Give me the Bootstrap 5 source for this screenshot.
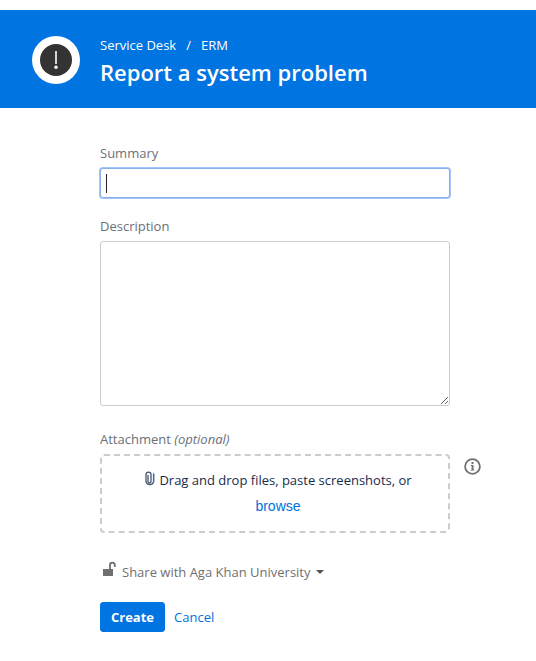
<!DOCTYPE html>
<html lang="en">
<head>
<meta charset="utf-8">
<meta name="viewport" content="width=device-width, initial-scale=1">
<title>Report a system problem</title>
<link href="https://cdn.jsdelivr.net/npm/bootstrap@5.3.0/dist/css/bootstrap.min.css" rel="stylesheet">
<style>
  body { font: 14px/20px "Open Sans", "Noto Sans", sans-serif; color: #172b4d; background: #fff; }
  .text-ui { font-size: 13px; }
  .desk-header { background: #0074e0; margin-top: 10px; padding: 25px 32px 19px; gap: 20px; }
  .desk-header svg { margin-top: 1px; }
  .crumbs { gap: 10px; }
  .desk-title { font-size: 22px; line-height: 34px; font-weight: 600; }
  .request-form { padding: 35px 54px 24px 100px; }
  .field-col { max-width: 350px; }
  .field-gap { margin-bottom: 18px; }
  .area-gap { margin-bottom: 23px; }
  .field-label { color: #6b7078; line-height: 20px; margin-bottom: 5px; }
  .form-control { border-color: #ccc; border-radius: 3px; padding: 4px 6px; font-size: 14px; }
  .summary-box, .summary-box:focus {
    height: 30px; border-color: #8aaee8; box-shadow: 0 0 0 1px #a4c5fb;
    background: linear-gradient(#222, #222) 5px 5px / 1px 19px no-repeat #fff;
  }
  .description-box { height: 165px; resize: vertical; }
  .drop-zone { border: 2px dashed #ccc; border-radius: 4px; padding: 11px 8px 12px 14px; line-height: 26px; }
  .browse-btn { font: 14px/26px "Liberation Sans", Arial, sans-serif; color: #0071dc; }
  .muted-ink { color: #707070; }
  .info-btn { margin: 29px 0 0 14px; }
  .share-btn { gap: 5px; line-height: 20px; }
  .create-btn { --bs-btn-bg: #0074e0; --bs-btn-border-color: #0074e0; border-radius: 3px; padding: 4px 10px; line-height: 20px; font-size: 13px; font-weight: 700; }
  .cancel-link { color: #0071dc; margin-left: 9px; }
</style>
</head>
<body>
<header class="desk-header d-flex text-white">
  <svg class="flex-shrink-0" width="48" height="48" viewBox="0 0 48 48" aria-hidden="true">
    <circle cx="24" cy="24" r="24" fill="#fff"/>
    <circle cx="24" cy="24" r="16" fill="#333"/>
    <path d="M24 15v13" stroke="#fff" stroke-width="1.6"/>
    <circle cx="24" cy="31.300" r="1.700" fill="#fff"/>
  </svg>
  <div>
    <nav class="crumbs d-flex text-ui" aria-label="Breadcrumb">
      <a href="#" class="text-white text-decoration-none">Service Desk</a>
      <span>/</span>
      <a href="#" class="text-white text-decoration-none">ERM</a>
    </nav>
    <h1 class="desk-title mb-0">Report a system problem</h1>
  </div>
</header>

<main>
  <form class="request-form text-ui">
    <div class="field-col field-gap">
      <label class="field-label d-block" for="summary">Summary</label>
      <input class="form-control summary-box" type="text" id="summary">
    </div>
    <div class="field-col area-gap">
      <label class="field-label d-block" for="description">Description</label>
      <textarea class="form-control description-box d-block" id="description"></textarea>
    </div>
    <div class="d-flex align-items-start">
      <div class="field-col flex-grow-1">
        <div class="field-label" id="attachment-label">Attachment <em>(optional)</em></div>
        <div class="drop-zone text-center" role="group" aria-labelledby="attachment-label">
          <div class="d-flex justify-content-center gap-1">
            <svg class="mt-1 flex-shrink-0" width="11" height="16" viewBox="0 0 11 16" fill="none" stroke-width="1.300" stroke-linecap="round" aria-hidden="true">
              <path d="M4 4.500v6a1.500 1.500 0 0 0 3 0V3.600a2.500 2.500 0 0 0-5 0v7a3.900 3.900 0 0 0 7.600 0V3" stroke="#44546f"/>
              <path d="M9.600 3.500v7" stroke="#2378c0"/>
            </svg>
            <span>Drag and drop files, paste screenshots, or</span>
          </div>
          <button type="button" class="browse-btn btn btn-link border-0 p-0 text-decoration-none d-block mx-auto">browse</button>
        </div>
      </div>
      <button type="button" class="info-btn btn border-0 p-0 lh-1 muted-ink" aria-label="Attachment help">
        <svg class="d-block" width="17" height="17" viewBox="0 0 17 17" aria-hidden="true">
          <circle cx="8.500" cy="8.500" r="7.400" fill="none" stroke="currentColor" stroke-width="1.800"/>
          <path d="M7.500 4h2v2h-2zM6.800 7h2.700v4.500h.8v1H6.800v-1h.8V8h-.8z" fill="currentColor"/>
        </svg>
      </button>
    </div>
    <div class="mt-4 pt-1">
      <button type="button" class="share-btn btn border-0 p-0 text-ui muted-ink d-flex align-items-center">
        <svg class="mb-1" width="17" height="17" viewBox="0 0 17 17" aria-hidden="true">
          <path d="M3 8h10v6.500q0 .5-.5.500h-9q-.5 0-.5-.5z" fill="currentColor"/>
          <path d="M10 8V4a2.400 2.400 0 0 1 4.800 0v2" fill="none" stroke="currentColor" stroke-width="1.800"/>
        </svg>
        <span>Share with Aga Khan University</span>
        <svg width="8" height="4" viewBox="0 0 8 4" aria-hidden="true"><path d="M0 0h8L4 4z" fill="#555"/></svg>
      </button>
    </div>
    <div class="d-flex align-items-center mt-3 pt-1">
      <button type="submit" class="create-btn btn btn-primary">Create</button>
      <a href="#" class="cancel-link text-decoration-none">Cancel</a>
    </div>
  </form>
</main>
<script src="https://cdn.jsdelivr.net/npm/bootstrap@5.3.0/dist/js/bootstrap.bundle.min.js"></script>
</body>
</html>
